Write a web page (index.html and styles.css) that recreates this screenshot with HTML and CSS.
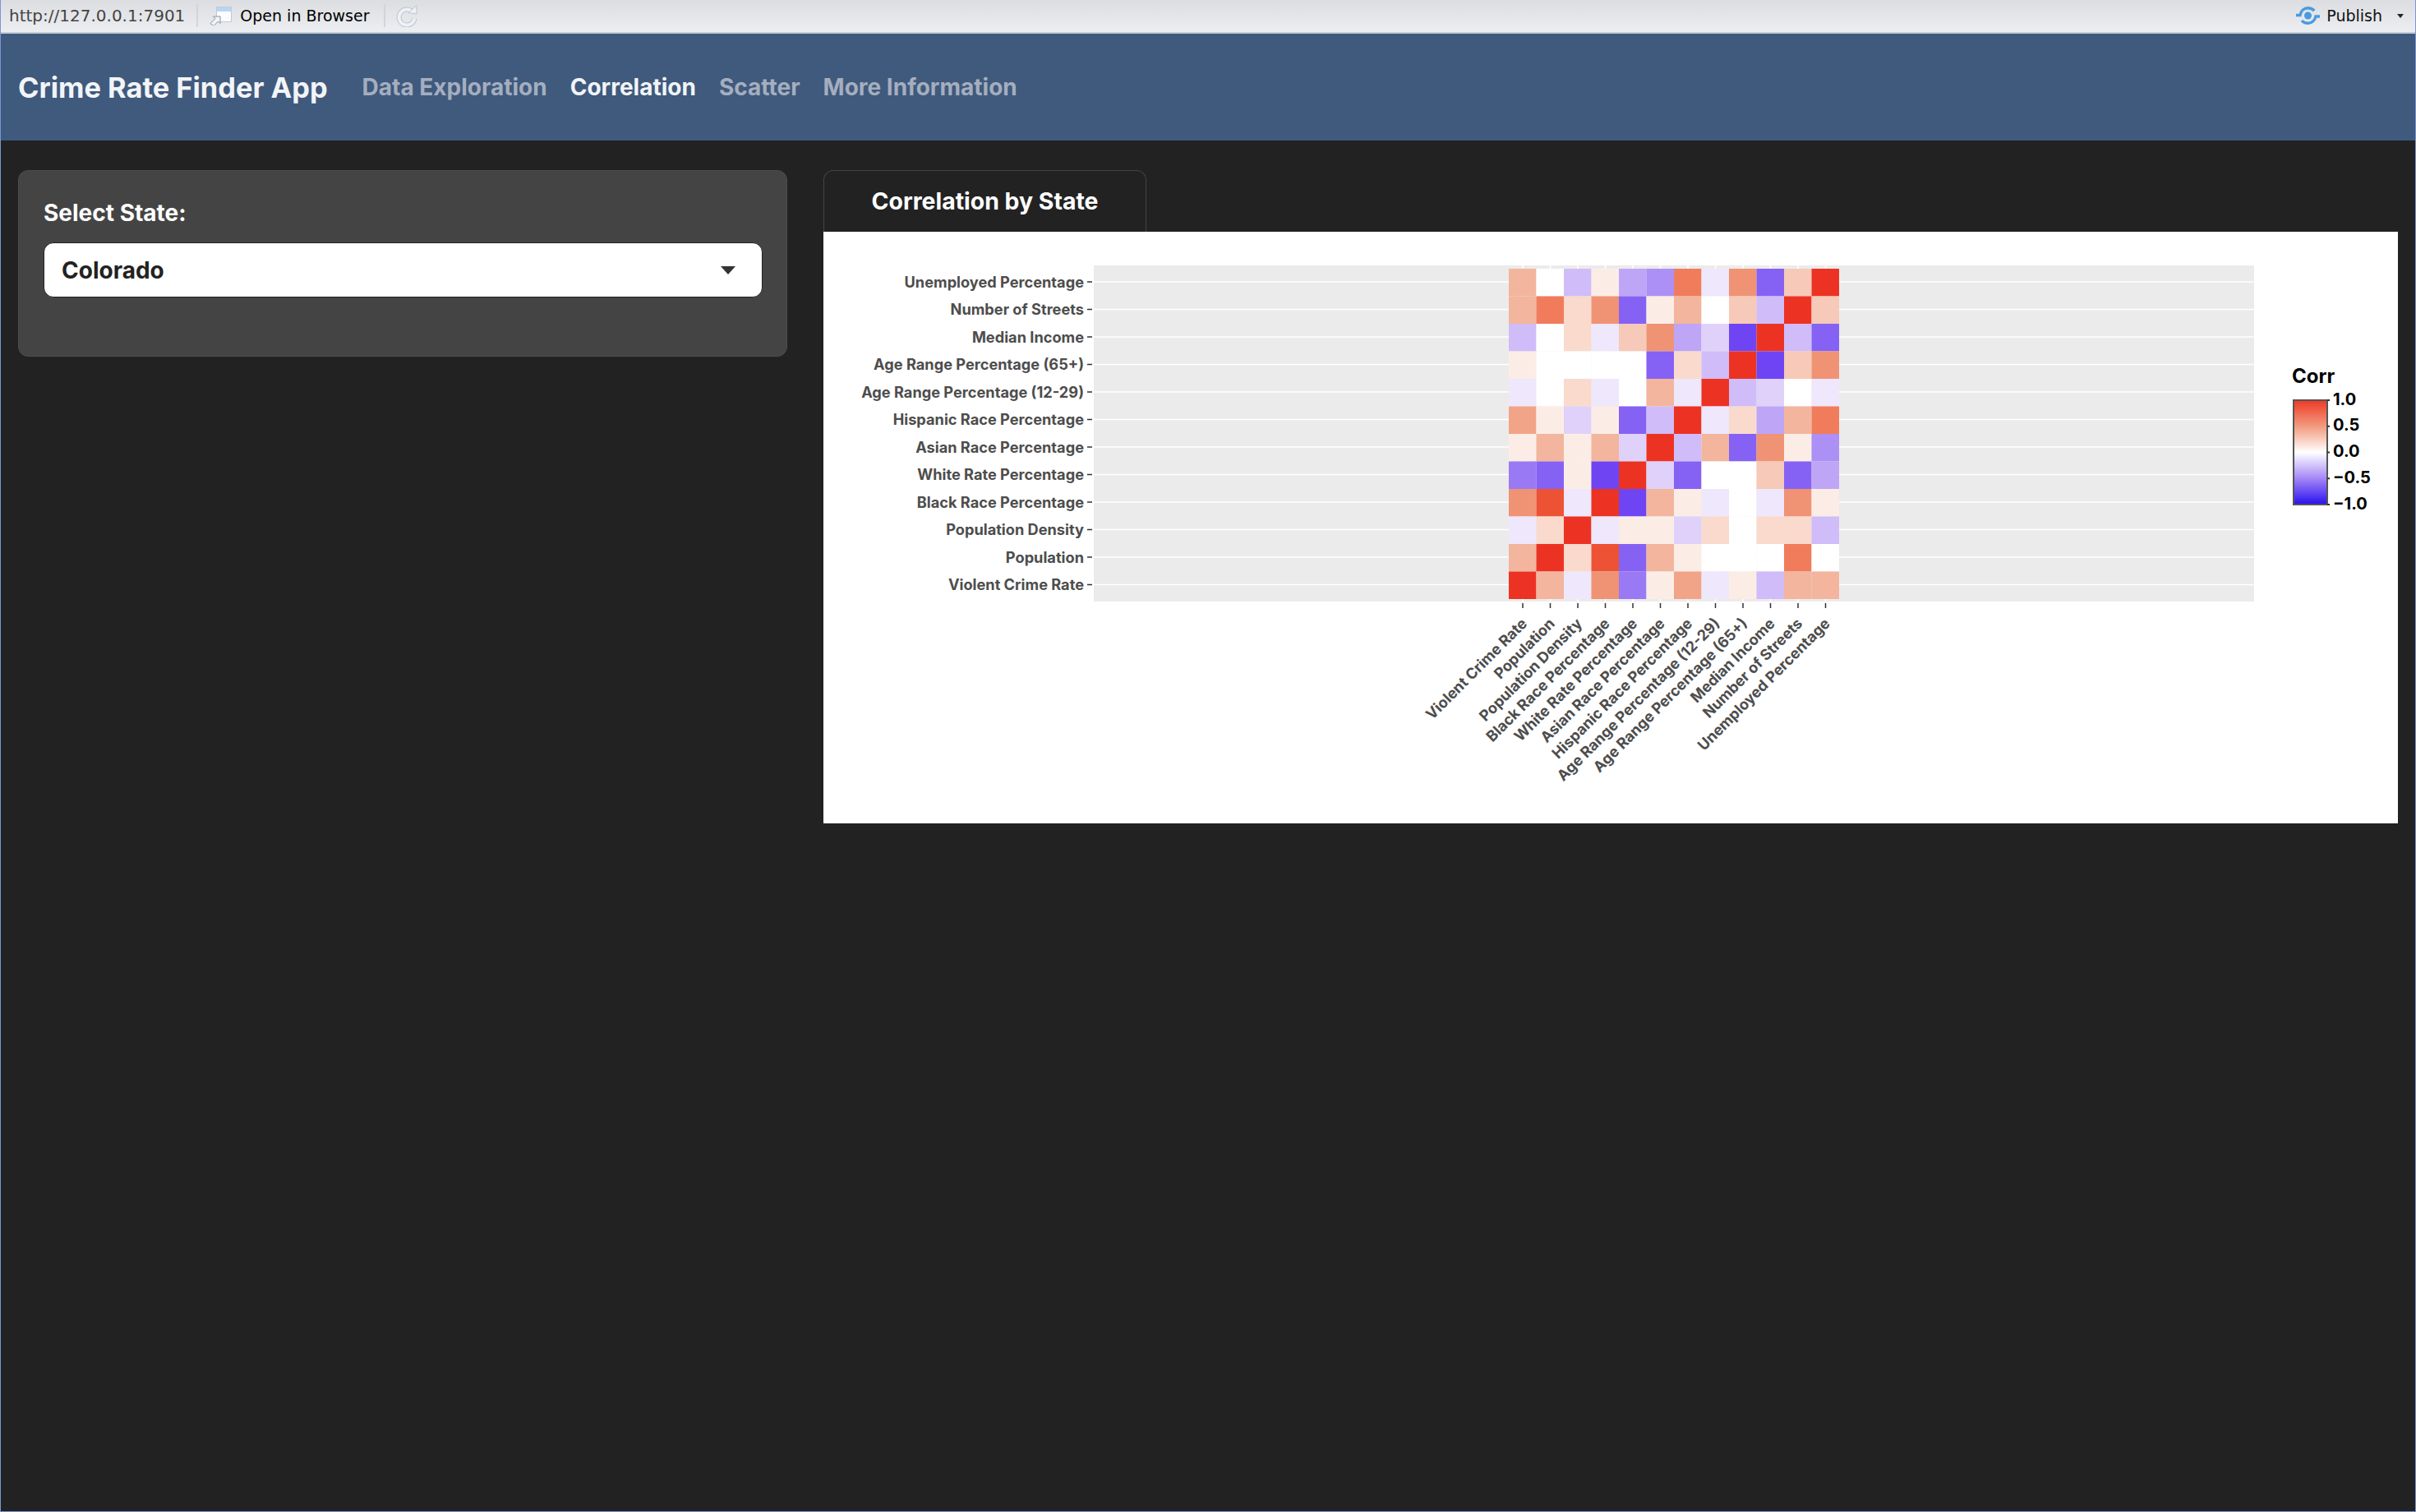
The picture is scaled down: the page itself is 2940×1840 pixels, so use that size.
FILE: index.html
```html
<!DOCTYPE html>
<html>
  <head>
    <meta charset="UTF-8">
    <title>Crime Rate Finder App</title>
    <link rel="stylesheet" href="styles.css">
  </head>
  <body>
    <div id="toolbar">
      <span class="url">http://127.0.0.1:7901</span>
      <span class="sep"></span>
      <svg class="open-icon" width="28" height="24" viewBox="0 0 28 24">
        <path d="M8.500 1.500h18v18h-18z" fill="#fbfcfe" stroke="#c3c9d3"/>
        <path d="M9 2h17v5H9z" fill="#b9d6f3"/>
        <path d="M1 21.500l6-6-2.500-2.500h8.500v8.500l-2.500-2.500-5.500 5.500z" fill="#f2f4f7" stroke="#8b94a0"/>
      </svg>
      <span class="open-text">Open in Browser</span>
      <span class="sep"></span>
      <svg class="refresh-icon" width="27" height="28" viewBox="0 0 27 28">
        <path d="M19 8.500a9.500 9.500 0 1 0 3.500 9" fill="none" stroke="#bcc3d1" stroke-width="6"/>
        <path d="M19 8.500a9.500 9.500 0 1 0 3.500 9" fill="none" stroke="#eef1f5" stroke-width="4"/>
        <path d="M15 10.500l10-9v10.500z" fill="#eef1f5" stroke="#bcc3d1"/>
      </svg>
      <span class="publish">
        <svg width="29" height="22" viewBox="0 0 29 22">
          <circle cx="14.500" cy="11" r="4.500" fill="#4a9ae0"/>
          <path d="M0 10.500h5C6 5 10 1.700 14.500 1.700c3 0 5.700 1 7.800 3.300M7 17c2 2.300 4.500 3.300 7.500 3.300 4.500 0 8.500-3.300 9.500-8.300h5" fill="none" stroke="#4a9ae0" stroke-width="3.400"/>
        </svg>
        <span>Publish</span>
        <i class="publish-caret"></i>
      </span>
    </div>

    <nav id="navbar">
      <span class="brand">Crime Rate Finder App</span>
      <a class="nav-link">Data Exploration</a>
      <a class="nav-link active">Correlation</a>
      <a class="nav-link">Scatter</a>
      <a class="nav-link">More Information</a>
    </nav>

    <div id="contenido">
      <aside id="sidebar">
        <label>Select State:</label>
        <div class="select">
          <span>Colorado</span>
          <i class="select-caret"></i>
        </div>
      </aside>

      <main id="principal">
        <div class="tab">Correlation by State</div>
        <div class="plot">
          <svg width="1916" height="720" viewBox="0 0 1916 720">
            <rect class="panel" x="329" y="41" width="1412" height="409"/>
            <path class="grid" d="M329 61H1741M329 94.500H1741M329 128H1741M329 161.500H1741M329 195H1741M329 228.500H1741M329 262H1741M329 295.500H1741M329 329H1741M329 362.500H1741M329 396H1741M329 429.500H1741"/>
            <path class="grid" d="M851 41V450M884.500 41V450M918 41V450M951.500 41V450M985 41V450M1018.500 41V450M1052 41V450M1085.500 41V450M1119 41V450M1152.500 41V450M1186 41V450M1219.500 41V450"/>

            <!-- filas de arriba hacia abajo -->
            <g class="cells">
              <g transform="translate(0 45)">
                <rect class="r3" x="834"/><rect class="w" x="867.500"/><rect class="b3" x="901"/><rect class="r0" x="934.500"/><rect class="b4" x="968"/><rect class="b5" x="1001.500"/><rect class="r6" x="1035"/><rect class="b1" x="1068.500"/><rect class="r5" x="1102"/><rect class="b7" x="1135.500"/><rect class="r2" x="1169"/><rect class="rr" x="1202.500"/>
              </g>
              <g transform="translate(0 78.500)">
                <rect class="r3" x="834"/><rect class="r6" x="867.500"/><rect class="r1" x="901"/><rect class="r5" x="934.500"/><rect class="b7" x="968"/><rect class="r0" x="1001.500"/><rect class="r3" x="1035"/><rect class="w" x="1068.500"/><rect class="r2" x="1102"/><rect class="b3" x="1135.500"/><rect class="rr" x="1169"/><rect class="r2" x="1202.500"/>
              </g>
              <g transform="translate(0 112)">
                <rect class="b3" x="834"/><rect class="w" x="867.500"/><rect class="r1" x="901"/><rect class="b1" x="934.500"/><rect class="r2" x="968"/><rect class="r5" x="1001.500"/><rect class="b4" x="1035"/><rect class="b2" x="1068.500"/><rect class="b8" x="1102"/><rect class="rr" x="1135.500"/><rect class="b3" x="1169"/><rect class="b7" x="1202.500"/>
              </g>
              <g transform="translate(0 145.500)">
                <rect class="r0" x="834"/><rect class="w" x="867.500"/><rect class="w" x="901"/><rect class="w" x="934.500"/><rect class="w" x="968"/><rect class="b7" x="1001.500"/><rect class="r1" x="1035"/><rect class="b3" x="1068.500"/><rect class="rr" x="1102"/><rect class="b8" x="1135.500"/><rect class="r2" x="1169"/><rect class="r5" x="1202.500"/>
              </g>
              <g transform="translate(0 179)">
                <rect class="b1" x="834"/><rect class="w" x="867.500"/><rect class="r1" x="901"/><rect class="b1" x="934.500"/><rect class="w" x="968"/><rect class="r3" x="1001.500"/><rect class="b1" x="1035"/><rect class="rr" x="1068.500"/><rect class="b3" x="1102"/><rect class="b2" x="1135.500"/><rect class="w" x="1169"/><rect class="b1" x="1202.500"/>
              </g>
              <g transform="translate(0 212.500)">
                <rect class="r4" x="834"/><rect class="r0" x="867.500"/><rect class="b2" x="901"/><rect class="r0" x="934.500"/><rect class="b7" x="968"/><rect class="b3" x="1001.500"/><rect class="rr" x="1035"/><rect class="b1" x="1068.500"/><rect class="r1" x="1102"/><rect class="b4" x="1135.500"/><rect class="r3" x="1169"/><rect class="r6" x="1202.500"/>
              </g>
              <g transform="translate(0 246)">
                <rect class="r0" x="834"/><rect class="r3" x="867.500"/><rect class="r0" x="901"/><rect class="r3" x="934.500"/><rect class="b2" x="968"/><rect class="rr" x="1001.500"/><rect class="b3" x="1035"/><rect class="r3" x="1068.500"/><rect class="b7" x="1102"/><rect class="r5" x="1135.500"/><rect class="r0" x="1169"/><rect class="b5" x="1202.500"/>
              </g>
              <g transform="translate(0 279.500)">
                <rect class="b6" x="834"/><rect class="b7" x="867.500"/><rect class="r0" x="901"/><rect class="b8" x="934.500"/><rect class="rr" x="968"/><rect class="b2" x="1001.500"/><rect class="b7" x="1035"/><rect class="w" x="1068.500"/><rect class="w" x="1102"/><rect class="r2" x="1135.500"/><rect class="b7" x="1169"/><rect class="b4" x="1202.500"/>
              </g>
              <g transform="translate(0 313)">
                <rect class="r5" x="834"/><rect class="r7" x="867.500"/><rect class="b1" x="901"/><rect class="rr" x="934.500"/><rect class="b8" x="968"/><rect class="r3" x="1001.500"/><rect class="r0" x="1035"/><rect class="b1" x="1068.500"/><rect class="w" x="1102"/><rect class="b1" x="1135.500"/><rect class="r5" x="1169"/><rect class="r0" x="1202.500"/>
              </g>
              <g transform="translate(0 346.500)">
                <rect class="b1" x="834"/><rect class="r1" x="867.500"/><rect class="rr" x="901"/><rect class="b1" x="934.500"/><rect class="r0" x="968"/><rect class="r0" x="1001.500"/><rect class="b2" x="1035"/><rect class="r1" x="1068.500"/><rect class="w" x="1102"/><rect class="r1" x="1135.500"/><rect class="r1" x="1169"/><rect class="b3" x="1202.500"/>
              </g>
              <g transform="translate(0 380)">
                <rect class="r3" x="834"/><rect class="rr" x="867.500"/><rect class="r1" x="901"/><rect class="r7" x="934.500"/><rect class="b7" x="968"/><rect class="r3" x="1001.500"/><rect class="r0" x="1035"/><rect class="w" x="1068.500"/><rect class="w" x="1102"/><rect class="w" x="1135.500"/><rect class="r6" x="1169"/><rect class="w" x="1202.500"/>
              </g>
              <g transform="translate(0 413.500)">
                <rect class="rr" x="834"/><rect class="r3" x="867.500"/><rect class="b1" x="901"/><rect class="r5" x="934.500"/><rect class="b6" x="968"/><rect class="r0" x="1001.500"/><rect class="r4" x="1035"/><rect class="b1" x="1068.500"/><rect class="r0" x="1102"/><rect class="b3" x="1135.500"/><rect class="r3" x="1169"/><rect class="r3" x="1202.500"/>
              </g>
            </g>

            <path class="tick" d="M321 61h6M321 94.500h6M321 128h6M321 161.500h6M321 195h6M321 228.500h6M321 262h6M321 295.500h6M321 329h6M321 362.500h6M321 396h6M321 429.500h6"/>
            <path class="tick" d="M851 452v6M884.500 452v6M918 452v6M951.500 452v6M985 452v6M1018.500 452v6M1052 452v6M1085.500 452v6M1119 452v6M1152.500 452v6M1186 452v6M1219.500 452v6"/>

            <g class="y-labels">
              <text x="317" y="67.500">Unemployed Percentage</text>
              <text x="317" y="101">Number of Streets</text>
              <text x="317" y="134.500">Median Income</text>
              <text x="317" y="168">Age Range Percentage (65+)</text>
              <text x="317" y="201.500">Age Range Percentage (12-29)</text>
              <text x="317" y="235">Hispanic Race Percentage</text>
              <text x="317" y="268.500">Asian Race Percentage</text>
              <text x="317" y="302">White Rate Percentage</text>
              <text x="317" y="335.500">Black Race Percentage</text>
              <text x="317" y="369">Population Density</text>
              <text x="317" y="402.500">Population</text>
              <text x="317" y="436">Violent Crime Rate</text>
            </g>

            <g class="x-labels">
              <text transform="translate(857.500 478) rotate(-45)">Violent Crime Rate</text>
              <text transform="translate(891 478) rotate(-45)">Population</text>
              <text transform="translate(924.500 478) rotate(-45)">Population Density</text>
              <text transform="translate(958 478) rotate(-45)">Black Race Percentage</text>
              <text transform="translate(991.500 478) rotate(-45)">White Rate Percentage</text>
              <text transform="translate(1025 478) rotate(-45)">Asian Race Percentage</text>
              <text transform="translate(1058.500 478) rotate(-45)">Hispanic Race Percentage</text>
              <text transform="translate(1092 478) rotate(-45)">Age Range Percentage (12-29)</text>
              <text transform="translate(1125.500 478) rotate(-45)">Age Range Percentage (65+)</text>
              <text transform="translate(1159 478) rotate(-45)">Median Income</text>
              <text transform="translate(1192.500 478) rotate(-45)">Number of Streets</text>
              <text transform="translate(1226 478) rotate(-45)">Unemployed Percentage</text>
            </g>

            <!-- leyenda -->
            <defs>
              <linearGradient id="escala" x1="0" y1="0" x2="0" y2="1">
                <stop offset="0" stop-color="#ee3a26"/>
                <stop offset="0.25" stop-color="#f29a7e"/>
                <stop offset="0.5" stop-color="#ffffff"/>
                <stop offset="0.75" stop-color="#a487f6"/>
                <stop offset="1" stop-color="#2a10f0"/>
              </linearGradient>
            </defs>
            <text class="legend-title" x="1787" y="184">Corr</text>
            <rect class="legend-bar" x="1789" y="205" width="41" height="127"/>
            <path class="legend-tick" d="M1830 205h3M1830 236.800h3M1830 268.500h3M1830 300.300h3M1830 332h3"/>
            <g class="legend-labels">
              <text x="1837" y="210.500">1.0</text>
              <text x="1837" y="242">0.5</text>
              <text x="1837" y="274">0.0</text>
              <text x="1837" y="305.500">−0.5</text>
              <text x="1837" y="337.500">−1.0</text>
            </g>
          </svg>
        </div>
      </main>
    </div>
  </body>
</html>
```

FILE: styles.css
```css
* {
  box-sizing: border-box;
}

body {
  margin: 0;
  height: 1840px;
  overflow: hidden;
  background-color: #222;
  border-left: 1px solid #7a97d0;
  border-right: 1px solid #7a97d0;
  border-bottom: 1px solid #7a97d0;
  font-family: "Inter", sans-serif;
}

#toolbar {
  display: flex;
  align-items: center;
  height: 41px;
  margin: 0 -1px;
  padding: 0 0 2px 11px;
  background: linear-gradient(#dcdde0, #eceef2);
  border-bottom: 2px solid #c5cbd6;
  font-family: "DejaVu Sans", sans-serif;
  font-size: 19px;
}

.url {
  color: #444;
  font-size: 20px;
}

.sep {
  width: 2px;
  height: 28px;
  margin: 0 14px;
  background-color: #d2d4d8;
}

.open-text {
  margin: 0 4px 0 9px;
  color: #000;
}

.refresh-icon {
  margin-left: -1px;
}

.publish {
  display: flex;
  align-items: center;
  margin-left: auto;
  color: #111;
  font-size: 19px;
}

.publish span {
  margin-left: 8px;
}

.publish-caret {
  width: 0;
  height: 0;
  margin: 2px 15px 0 18px;
  border-left: 4px solid transparent;
  border-right: 4px solid transparent;
  border-top: 5px solid #222;
}

#navbar {
  display: flex;
  align-items: center;
  height: 130px;
  padding-left: 21px;
  background-color: #3f5a7d;
  font-weight: 700;
}

.brand {
  margin-right: 28px;
  color: #f2f4f7;
  font-size: 34.400px;
}

.nav-link {
  padding: 0 14px;
  color: #a5aebf;
  font-size: 28px;
}

.nav-link.active {
  color: #f2f4f7;
}

#contenido {
  display: flex;
  gap: 44px;
  padding: 36px 21px 0;
}

#sidebar {
  width: 936px;
  height: 227px;
  padding: 34px 29px 34px 30px;
  background-color: #444;
  border: 1px solid #4c4c4c;
  border-radius: 12px;
}

#sidebar label {
  display: block;
  margin-bottom: 19px;
  color: #fff;
  font-size: 28px;
  font-weight: 700;
}

.select {
  display: flex;
  align-items: center;
  justify-content: space-between;
  height: 67px;
  padding: 0 32px 0 21px;
  background-color: #fff;
  border: 1px solid #222;
  border-radius: 12px;
  color: #222;
  font-size: 28px;
  font-weight: 700;
}

.select-caret {
  width: 0;
  height: 0;
  border-left: 9px solid transparent;
  border-right: 9px solid transparent;
  border-top: 10px solid #333;
}

#principal {
  width: 1916px;
}

.tab {
  display: flex;
  align-items: center;
  justify-content: center;
  width: 393px;
  height: 75px;
  padding-bottom: 2px;
  color: #fff;
  border: 1px solid #444;
  border-bottom: 0;
  border-radius: 12px 12px 0 0;
  font-size: 28.400px;
  font-weight: 700;
}

.plot {
  height: 720px;
  background-color: #fff;
}

.plot svg {
  display: block;
}

.panel {
  fill: #ebebeb;
}

.grid {
  fill: none;
  stroke: #fff;
  stroke-width: 1.500;
}

.cells rect {
  width: 33.500px;
  height: 33.500px;
}

.rr { fill: #ec3323; }
.r7 { fill: #ed5235; }
.r6 { fill: #f07c5c; }
.r5 { fill: #f09374; }
.r4 { fill: #f2a488; }
.r3 { fill: #f3b59e; }
.r2 { fill: #f7c9b8; }
.r1 { fill: #f9dacd; }
.r0 { fill: #fbede6; }
.w { fill: #fff; }
.b1 { fill: #efe7fb; }
.b2 { fill: #e0d1fa; }
.b3 { fill: #d0bcf8; }
.b4 { fill: #bea5f6; }
.b5 { fill: #ad90f6; }
.b6 { fill: #9a79f5; }
.b7 { fill: #8562f4; }
.b8 { fill: #6f45f3; }

.tick {
  fill: none;
  stroke: #333;
  stroke-width: 1.500;
}

.y-labels text,
.x-labels text {
  fill: #4d4d4d;
  font-size: 18.200px;
  font-weight: 700;
  text-anchor: end;
}

.legend-title {
  fill: #000;
  font-size: 24px;
  font-weight: 700;
}

.legend-bar {
  fill: url(#escala);
  stroke: #555;
  stroke-width: 2;
}

.legend-tick {
  fill: none;
  stroke: #333;
  stroke-width: 2;
}

.legend-labels text {
  fill: #000;
  font-size: 20px;
  font-weight: 700;
}
```
